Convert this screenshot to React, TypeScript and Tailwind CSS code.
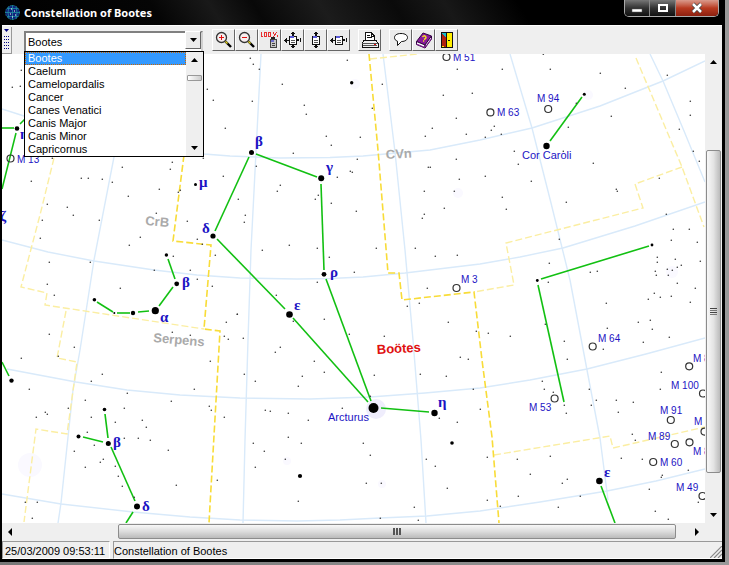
import { useState } from "react";
import type { ReactNode } from "react";

type Point = [number, number];

const constellations = [
  "Bootes",
  "Caelum",
  "Camelopardalis",
  "Cancer",
  "Canes Venatici",
  "Canis Major",
  "Canis Minor",
  "Capricornus",
];

// the chart shares one coordinate space, see viewBox in StarChart
const faintStars: Point[] = [
  [21, 70], [12, 87], [20, 86], [207, 89], [213, 100], [225, 128],
  [52, 158], [31, 181], [81, 178], [88, 178], [102, 179], [112, 182], [122, 167], [47, 204], [67, 207],
  [73, 215], [42, 220], [99, 220], [40, 238], [128, 196], [159, 189], [156, 213], [187, 221], [140, 237],
  [129, 245], [197, 239], [202, 244], [215, 255], [173, 256], [190, 270], [197, 279], [212, 286], [154, 270],
  [90, 262], [120, 288], [49, 262], [47, 284], [54, 295], [49, 334], [74, 347], [172, 332], [190, 335],
  [226, 322], [237, 314], [224, 336], [228, 339], [223, 176], [238, 199], [178, 192], [180, 190], [172, 162],
  [170, 169], [203, 158],
  [21, 358], [58, 356], [29, 389], [45, 412], [47, 414], [36, 417], [68, 408], [85, 400], [91, 381],
  [102, 374], [127, 393], [91, 417], [115, 422], [124, 408], [142, 420], [146, 427], [171, 401], [194, 389],
  [210, 361], [209, 406], [211, 410], [224, 417], [87, 432], [94, 445], [74, 451], [103, 459], [100, 462],
  [85, 467], [115, 466], [118, 476], [122, 486], [124, 438], [138, 438], [150, 440], [168, 450], [176, 485],
  [217, 480], [25, 502], [37, 502], [32, 518], [134, 497],
  [250, 58], [253, 64], [259, 69], [252, 101], [282, 84], [304, 105], [306, 114], [326, 136], [331, 145],
  [293, 153], [360, 137], [347, 60], [372, 108], [382, 84], [357, 159], [337, 177], [350, 171], [352, 172],
  [256, 166], [280, 185], [277, 191], [245, 215], [244, 222], [318, 195], [315, 199], [331, 203], [356, 211],
  [289, 245], [317, 248], [376, 248], [415, 248], [457, 69], [472, 93], [443, 95], [456, 118], [432, 128],
  [425, 136], [466, 134], [456, 159], [428, 167], [430, 167], [459, 179], [424, 191], [454, 191], [444, 208],
  [424, 214], [422, 218],
  [262, 250], [329, 257], [354, 272], [317, 282], [276, 295], [237, 314], [324, 319], [243, 338], [275, 352],
  [280, 347], [314, 361], [349, 334], [384, 336], [407, 306], [419, 303], [427, 288], [435, 256], [457, 255],
  [448, 322], [476, 331], [460, 357], [468, 359], [420, 374], [446, 376], [473, 389], [374, 375], [244, 374],
  [255, 381], [302, 376], [324, 372], [298, 386], [265, 410], [270, 411], [288, 413], [308, 420], [288, 437],
  [342, 408], [439, 418], [457, 422], [370, 396], [293, 321],
  [543, 54], [502, 69], [550, 69], [600, 73], [625, 88], [667, 75], [690, 101], [690, 115], [679, 129],
  [693, 151], [699, 161], [611, 116], [568, 127], [563, 151], [576, 103], [593, 163], [616, 189], [617, 191],
  [659, 178], [566, 202], [531, 181], [518, 164], [514, 151], [485, 176], [502, 197], [506, 209], [494, 126],
  [491, 130], [501, 134], [485, 137], [666, 214], [559, 239], [673, 229], [689, 229], [671, 240], [697, 242],
  [700, 261], [657, 257], [657, 262], [675, 259], [681, 265], [677, 267], [667, 269], [672, 270], [655, 271],
  [656, 275], [668, 275], [549, 263], [590, 272], [597, 271],
  [548, 282], [677, 283], [695, 288], [654, 293], [660, 297], [671, 296], [648, 299], [690, 302], [606, 303],
  [650, 320], [638, 322], [652, 329], [669, 337], [643, 342], [607, 328], [603, 349], [564, 341], [567, 359],
  [545, 324], [488, 333], [510, 336], [661, 372], [660, 389], [633, 402], [616, 400], [618, 412], [589, 389],
  [596, 400], [591, 405], [564, 405], [566, 413], [542, 381], [544, 389], [553, 392], [480, 409], [632, 434],
  [635, 440], [487, 457], [517, 459], [550, 456], [621, 458], [642, 459], [530, 474], [562, 483], [567, 479],
  [688, 470], [662, 475], [661, 477], [649, 489], [580, 496], [518, 496], [487, 500], [500, 506], [558, 507],
  [698, 502], [655, 511], [668, 519],
  [253, 443], [301, 443], [264, 451], [285, 459], [255, 467], [363, 443], [370, 455], [366, 483], [381, 483],
  [426, 459], [435, 466], [447, 488], [414, 507], [418, 520], [380, 518], [298, 501],
];

const brightStars: [number, number, number][] = [
  [251.5, 152.5, 2.5], [321.2, 178.3, 3], [213, 236, 2.6], [324, 274.3, 2.4], [289.5, 314.5, 3.3],
  [373.5, 408, 5], [434.5, 413, 3.2], [546.5, 146, 3.2], [584.3, 94.3, 1.5], [537.3, 280.5, 1.4],
  [652, 245, 1.4], [166.4, 255, 1.7], [176.7, 283.8, 2.4], [155.3, 310.7, 3.6], [133, 313, 2.2],
  [114.3, 313, 1], [94.4, 299.7, 1.8], [195.5, 184.5, 1.5], [104.5, 409.5, 1.8], [78.5, 436.5, 2],
  [108.3, 443.4, 2.5], [137, 506.4, 3], [11.5, 380.6, 2.2], [17, 128.5, 2.3], [599.4, 481, 3.3],
  [351.7, 82.7, 1.7], [300, 476, 2.1], [452, 443, 1.8],
];

const gridLines = [
  "135,54 114,157 94,260 80,350 73,390 61,503 58,523",
  "261,54 256,152 251,250 248,340 245,440 243,523",
  "383,54 395,152 405,250 413,340 421,440 426,523",
  "510,54 532,128 551,203 570,280 587,370 600,438 608,500",
  "650,54 663,81 684,131 705,182",
  "2,109 24,116 90,136 150,148 204,154 230,156 280,158 330,157.5 363,156 430,150 480,140 532,128 600,106 663,81 705,61",
  "2,240 48,252 94,261 154,270 197,275 240,278 297,279 330,278.5 363,277 405,273 480,264 520,257 563,248 635,226 705,202",
  "7,369 76,382 127,390 180,395 240,398 310,399 370,397 425,393 480,388 530,380 587,369 646,354 705,338",
  "2,494 61,504 133,512 190,517 240,520 297,521 340,520 380,518 427,516 480,511 540,502 607,491 656,481 705,469",
];

const boundaries = [
  "184,155 173,241 211,245 204,329 220,331 209,523",
  "369,54 378,150 386,248 388,273 399,273 402,300 474,292 482,360 492,437 499,523",
];

const paleBoundaries = [
  "54,158 40,215 21,287 47,293 45,305 204,329",
  "66,311 57,358 77,362 67,434 36,429 24,522",
  "370,59 418,54",
  "636,58 682,167 704,227",
  "682,167 635,184 643,208 506,243 514,285 474,292",
  "494,455 610,436 613,448 705,427",
];

const figureLines: [number, number, number, number][] = [
  [2, 128, 14, 128], [16, 133, 2, 189], [20, 124, 30, 114],
  [256, 154, 317, 177], [249, 157, 215, 231], [321, 184, 324, 270], [326, 279, 371, 401],
  [217, 239, 285, 309], [293, 318, 368, 402], [381, 408, 429, 412],
  [550, 141, 582, 97], [541, 279, 649, 246], [538, 285, 564, 402],
  [168, 259, 175, 279], [173, 287, 159, 306], [149, 311, 138, 312], [130, 313, 117, 313], [113, 312, 97, 302],
  [105, 414, 108, 438], [83, 437, 103, 442], [111, 447, 135, 501], [133, 512, 126, 523],
  [2, 362, 9, 376], [601, 486, 615, 523],
];

const deepSky: Point[] = [
  [446.5, 57], [490.4, 112.4], [548.2, 109], [456.5, 288], [592.7, 346.5], [554.6, 398.5], [689.2, 366.3],
  [703, 393.5], [670.8, 420], [704.5, 431.6], [674.8, 444], [689.5, 442.3], [653.2, 462], [702.5, 496], [10.5, 158.5],
];

const deepSkyNames: [string, number, number][] = [
  ["M 51", 453, 61], ["M 63", 497, 116], ["M 94", 537, 102], ["M 3", 461, 283], ["M 64", 598, 342],
  ["M 53", 529, 411], ["M 8", 693, 362], ["M 100", 671, 389], ["M 91", 660, 414], ["M 8", 694, 425],
  ["M 89", 648, 440], ["M 8", 693, 455], ["M 60", 660, 466], ["M 49", 676, 491], ["M 13", 17, 163],
];

const greek: [string, number, number][] = [
  ["β", 255, 146], ["γ", 326, 172], ["δ", 202, 233], ["ε", 294, 310], ["ρ", 330, 277], ["η", 438, 407],
  ["μ", 199, 187], ["β", 182, 287], ["α", 160, 322], ["β", 113, 447], ["δ", 142, 511], ["ε", 604, 477],
  ["ζ", 0, 221], ["η", 20, 139],
];

function StarChart() {
  return (
    <svg
      viewBox="2 54 703 469"
      preserveAspectRatio="xMinYMin slice"
      className="block h-full w-full bg-white font-['Liberation_Sans',sans-serif]"
      role="img"
      aria-label="Star chart of Bootes"
    >
      <g fill="#faf9ff">
        <circle cx="376" cy="409" r="10" fill="#efedfc" />
        <circle cx="355" cy="84" r="5" />
        <circle cx="458" cy="193" r="5" />
        <circle cx="672" cy="272" r="6" />
        <circle cx="30" cy="465" r="12" />
        <circle cx="287" cy="461" r="4" />
        <circle cx="382" cy="484" r="4" />
        <circle cx="588" cy="95" r="5" />
      </g>
      <g fill="none" stroke="#d9eafa" strokeWidth="1.4" strokeLinejoin="round">
        {gridLines.map((p) => <polyline key={p} points={p} />)}
      </g>
      <g fill="none" stroke="#fbeea2" strokeWidth="1.4" strokeDasharray="7 3">
        {paleBoundaries.map((p) => <polyline key={p} points={p} />)}
      </g>
      <g fill="none" stroke="#f8dc38" strokeWidth="1.6" strokeDasharray="7 3">
        {boundaries.map((p) => <polyline key={p} points={p} />)}
      </g>
      <g fill="#aaaaaa" fontSize="13" fontWeight="bold">
        <text x="386" y="159" transform="rotate(-3 386 159)">CVn</text>
        <text x="145" y="225" transform="rotate(5 145 225)">CrB</text>
        <text x="153" y="342" transform="rotate(5 153 342)">Serpens</text>
      </g>
      <text x="377" y="354" fill="#e01010" fontSize="13" fontWeight="bold" transform="rotate(-3 377 354)">Boötes</text>
      <g stroke="#12c012" strokeWidth="1.6">
        {figureLines.map(([x1, y1, x2, y2]) => (
          <line key={`${x1}-${y1}`} x1={x1} y1={y1} x2={x2} y2={y2} />
        ))}
      </g>
      <g fill="#333333">
        {faintStars.map(([x, y]) => (
          <circle key={`${x}-${y}`} cx={x + 0.3} cy={y + 0.3} r="0.8" />
        ))}
      </g>
      {brightStars.map(([x, y, r]) => <circle key={`${x}-${y}`} cx={x} cy={y} r={r} />)}
      <g fill="none" stroke="#333333" strokeWidth="1.2">
        {deepSky.map(([x, y]) => <circle key={`${x}-${y}`} cx={x} cy={y} r="3.5" />)}
      </g>
      <g fill="#1c14c4" fontSize="10">
        {deepSkyNames.map(([name, x, y]) => <text key={`${name}-${y}`} x={x} y={y}>{name}</text>)}
      </g>
      <g fill="#1c14c4" fontSize="11">
        <text x="522" y="159">Cor Caroli</text>
        <text x="328" y="421">Arcturus</text>
      </g>
      <g fill="#1c14c4" fontSize="15" fontWeight="bold" className="font-['Liberation_Serif',serif]">
        {greek.map(([letter, x, y]) => <text key={`${letter}-${x}`} x={x} y={y}>{letter}</text>)}
      </g>
    </svg>
  );
}

function Icon({ children }: { children: ReactNode }) {
  return (
    <svg viewBox="0 0 20 20" className="size-5" shapeRendering="crispEdges" aria-hidden="true">
      {children}
    </svg>
  );
}

function Magnifier({ plus }: { plus?: boolean }) {
  return (
    <Icon>
      <g shapeRendering="auto">
        <path d="M11.500 11.500 17 17" stroke="#000" strokeWidth="2.400" />
        <path d="M11 11 13.500 13.500" stroke="#e8d820" strokeWidth="1.400" />
        <circle cx="7.500" cy="7.500" r="5" fill="#f6eeee" stroke="#333" strokeWidth="1.300" />
      </g>
      <path d="M5 7h5v1H5z" fill="#e01010" />
      {plus && <path d="M7 5h1v5H7z" fill="#e01010" />}
    </Icon>
  );
}

function Page({ horizontal, vertical }: { horizontal?: boolean; vertical?: boolean }) {
  return (
    <Icon>
      <path d="M6.500 6.500h7v8h-7z" fill="#fff" stroke="#111" />
      <path d="M7 6h4v2H7z" fill="#5a5ad8" />
      <path d="M8 10h4v1H8zM8 12h4v1H8z" fill="#555" />
      {vertical && (
        <path d="M9 2h2v1h1v1h-1v2H9V4H8V3h1zM9 15h2v1h1v1h-1v1H9v-1H8v-1h1z" fill="#111" />
      )}
      {horizontal && (
        <path d="M1 10h1V9h1V8h1v2h2v1H4v2H3v-1H2v-1H1zM14 9h2v2h-2zM17 8h1v4h-1z" fill="#111" />
      )}
    </Icon>
  );
}

function ToolButton({ label, children }: { label: string; children: ReactNode }) {
  return (
    <button
      type="button"
      aria-label={label}
      className="flex h-[22px] w-[23px] items-center justify-center border border-t-white border-r-[#666] border-b-[#666] border-l-white bg-[#ececec]"
    >
      {children}
    </button>
  );
}

function Toolbar() {
  return (
    <div className="ml-[9px] flex items-center">
      <ToolButton label="Zoom in"><Magnifier plus /></ToolButton>
      <ToolButton label="Zoom out"><Magnifier /></ToolButton>
      <ToolButton label="100 %">
        <Icon>
          <path
            d="M1.500 2v5M1 6.500h2M4.500 2.500h2v4h-2zM8.500 2.500h2v4h-2zM13.500 2v2M17 2l-4 5M17.500 5v2"
            stroke="#e83030"
            fill="none"
          />
          <path d="M10.500 9.500h6v8h-6z" fill="#c8c8c8" stroke="#444" />
          <path d="M11 7h4v2h-4z" fill="#222" />
          <path d="M11 10h3v2h-3z" fill="#7070d0" />
          <path d="M12 13h3v1h-3zM12 15h3v1h-3z" fill="#444" />
        </Icon>
      </ToolButton>
      <ToolButton label="Fit page"><Page horizontal vertical /></ToolButton>
      <ToolButton label="Fit height"><Page vertical /></ToolButton>
      <ToolButton label="Fit width"><Page horizontal /></ToolButton>
      <div className="ml-2 flex">
        <ToolButton label="Print">
          <Icon>
            <path d="M5.500 10V2.500H11L14.500 6V10" fill="#fff" stroke="#111" />
            <path d="M11.500 3v3H14M7 5.500h3M7 7.500h5" stroke="#111" fill="none" />
            <path d="M4 10.500h12l2 3v4H2v-4z" fill="#f2f2f2" stroke="#111" />
            <path d="M2 13.500h16M3 15.500h14" stroke="#555" />
            <path d="M14 14h2v1h-2z" fill="#e01010" />
          </Icon>
        </ToolButton>
      </div>
      <div className="ml-2 flex">
        <ToolButton label="Comment">
          <Icon>
            <path
              d="M10 3.500c4.500 0 6.500 2 6.500 4s-2 4-6 4L6.500 15.500v-4.300C4.500 10.500 3.500 9.300 3.500 7.500c0-2 2-4 6.500-4z"
              fill="#fff"
              stroke="#111"
              shapeRendering="auto"
            />
          </Icon>
        </ToolButton>
        <ToolButton label="Help">
          <Icon>
            <g shapeRendering="auto">
              <path d="M2.500 11.500 9 3l8.500 3L11 15z" fill="#8a1a9a" stroke="#300040" />
              <path d="M2.500 11.500v3L11 18v-3zM11 15v3l6.500-9V6z" fill="#fff" stroke="#300040" />
              <path d="M2.500 14 11 17.500l6.500-9" fill="none" stroke="#8a1a9a" />
              <path d="M8.500 7q1.500-2 3-.5t-1.500 3M9 11h1.200" fill="none" stroke="#f4e420" strokeWidth="1.500" />
            </g>
          </Icon>
        </ToolButton>
        <ToolButton label="Exit">
          <Icon>
            <path d="M4.500 2.500h11v15h-11z" fill="#ffee00" stroke="#111" />
            <path d="M5 3h4v4H5z" fill="#18b8c8" />
            <path d="M5 4 9 7v10l-4-1z" fill="#b02010" />
            <path d="M9 3h1v14H9z" fill="#111" />
            <path d="M11 10h2v1h-2z" fill="#111" />
          </Icon>
        </ToolButton>
      </div>
    </div>
  );
}

function ConstellationPicker({ value, onChange }: { value: string; onChange: (v: string) => void }) {
  return (
    <div className="relative ml-3 h-[22px] w-[179px]">
      <select
        aria-label="Constellation"
        value={value}
        onChange={(e) => onChange(e.target.value)}
        className="h-full w-full appearance-none border-2 border-t-[#808080] border-r-[#d0d0d0] border-b-[#d0d0d0] border-l-[#808080] bg-white pl-[2px] text-[11px] leading-4 text-black"
      >
        {constellations.map((c) => <option key={c}>{c}</option>)}
      </select>
      <span className="pointer-events-none absolute top-[2px] right-[2px] flex h-[18px] w-4 items-center justify-center border border-t-white border-r-[#666] border-b-[#666] border-l-white bg-[#ececec]">
        <Arrow d="M0 0h7L3.500 4z" />
      </span>
      <div className="absolute top-full left-0 z-10 flex w-[180px] border border-black bg-white">
        <ul role="listbox" aria-label="Constellations" className="flex-1">
          {constellations.map((c) => (
            <li
              key={c}
              role="option"
              aria-selected={c === value}
              onClick={() => onChange(c)}
              className="h-[13px] pl-[3px] text-[11px] leading-[13px] aria-selected:bg-[#3399ff] aria-selected:text-white aria-selected:outline aria-selected:-outline-offset-1 aria-selected:outline-dotted aria-selected:outline-[#cc6600]"
            >
              {c}
            </li>
          ))}
        </ul>
        <div className="flex w-[17px] flex-col items-center bg-[#efefef] py-[6px]">
          <Arrow d="M0 4h7L3.500 0z" />
          <div className="mt-[13px] h-[6px] w-[15px] rounded-[1px] border border-[#999] bg-linear-to-r from-white to-[#ccc]" />
          <div className="flex-1" />
          <Arrow d="M0 0h7L3.500 4z" />
        </div>
      </div>
    </div>
  );
}

function Arrow({ d }: { d: string }) {
  return (
    <svg viewBox="0 0 7 4" className="h-1 w-[7px]" aria-hidden="true">
      <path d={d} />
    </svg>
  );
}

function TitleBar() {
  return (
    <header className="flex h-[25px] shrink-0 justify-between bg-[linear-gradient(58deg,#000_0%,#050505_22%,#191919_30%,#080808_36%,#1c1c1c_45%,#0a0a0a_55%,#181818_62%,#000_72%)] pr-[3px]">
      <div className="flex items-center gap-1 pl-[3px]">
        <svg viewBox="0 0 15 15" className="size-[15px]" aria-hidden="true">
          <circle cx="7.500" cy="7.500" r="7" fill="#10207c" stroke="#1d8a9a" strokeWidth=".8" strokeDasharray="2 1" />
          <path d="M7.500 0v15M0 7.500h15M2 3.500h11M2 11.500h11M4 1.500q-2 6 0 12M11 1.500q2 6 0 12" stroke="#2090a0" strokeWidth=".8" fill="none" />
          <path d="M6 4h1M9 6h1M5 9h1M10 10h1M7 12h1" stroke="#fff" />
        </svg>
        <h1 className="font-['Noto_Sans',sans-serif] text-[11px] leading-4 font-bold text-white">
          Constellation of Bootes
        </h1>
      </div>
      <div className="flex h-[17px] overflow-hidden rounded-b-[5px] border border-t-0 border-[#aaa]">
        <button
          type="button"
          aria-label="Minimize"
          className="flex w-[25px] items-center justify-center border-r border-[#888] bg-linear-to-b from-[#777] via-[#333] to-[#111]"
        >
          <svg viewBox="0 0 12 12" className="size-3" aria-hidden="true">
            <path d="M1 7h10v3H1z" fill="#fff" stroke="#555" strokeWidth=".5" />
          </svg>
        </button>
        <button
          type="button"
          aria-label="Maximize"
          className="flex w-[26px] items-center justify-center border-r border-[#888] bg-linear-to-b from-[#777] via-[#333] to-[#111]"
        >
          <svg viewBox="0 0 12 12" className="size-3" aria-hidden="true">
            <path d="M2 3h8v6H2z" fill="none" stroke="#fff" strokeWidth="2" />
          </svg>
        </button>
        <button
          type="button"
          aria-label="Close"
          className="flex w-[42px] items-center justify-center bg-linear-to-b from-[#d99a8c] via-[#b83a20] to-[#8c2010]"
        >
          <svg viewBox="0 0 14 12" className="h-3 w-[14px]" aria-hidden="true">
            <path d="M3 2 11 10M11 2 3 10" stroke="#444" strokeWidth="4" />
            <path d="M3 2 11 10M11 2 3 10" stroke="#fff" strokeWidth="2.500" />
          </svg>
        </button>
      </div>
    </header>
  );
}

function VerticalScroll() {
  return (
    <div className="flex w-[17px] shrink-0 flex-col items-center bg-[#efefef]">
      <button type="button" aria-label="Scroll up" className="flex h-4 w-full items-center justify-center">
        <Arrow d="M0 4h7L3.500 0z" />
      </button>
      <div className="grow-[80] basis-0" />
      <div className="flex w-[15px] grow-[322] basis-0 flex-col items-center justify-center gap-px rounded-[2px] border border-[#8c8c8c] bg-linear-to-r from-[#f8f8f8] via-[#e4e4e4] to-[#bbb]">
        <span className="h-px w-[7px] bg-[#444]" />
        <span className="h-px w-[7px] bg-[#777]" />
        <span className="h-px w-[7px] bg-[#444]" />
        <span className="h-px w-[7px] bg-[#777]" />
      </div>
      <div className="grow-[34] basis-0" />
      <button type="button" aria-label="Scroll down" className="flex h-4 w-full items-center justify-center">
        <Arrow d="M0 0h7L3.500 4z" />
      </button>
    </div>
  );
}

function HorizontalScroll() {
  return (
    <div className="flex h-[18px] shrink-0 items-start bg-[#efefef] pt-px pr-[17px]">
      <button type="button" aria-label="Scroll left" className="flex h-[15px] w-4 items-center justify-center">
        <svg viewBox="0 0 4 8" className="h-2 w-1" aria-hidden="true"><path d="M4 0v8L0 4z" /></svg>
      </button>
      <div className="grow-[100] basis-0" />
      <div className="flex h-[15px] grow-[558] basis-0 items-center justify-center gap-px rounded-[2px] border border-[#8c8c8c] bg-linear-to-b from-[#f8f8f8] via-[#dcdcdc] to-[#bbb]">
        <span className="h-[7px] w-0.5 bg-[#555]" />
        <span className="h-[7px] w-0.5 bg-[#555]" />
        <span className="h-[7px] w-0.5 bg-[#555]" />
      </div>
      <div className="grow-[13] basis-0" />
      <button type="button" aria-label="Scroll right" className="flex h-[15px] w-4 items-center justify-center">
        <svg viewBox="0 0 4 8" className="h-2 w-1" aria-hidden="true"><path d="M0 0v8l4-4z" /></svg>
      </button>
    </div>
  );
}

function StatusBar() {
  return (
    <footer className="flex h-[18px] shrink-0 gap-[3px] bg-[#efefef] text-[11px] leading-[18px]">
      <span className="w-[108px] border border-t-[#999] border-r-white border-b-white border-l-[#999] pl-[2px] whitespace-nowrap">
        25/03/2009 09:53:11
      </span>
      <span className="flex flex-1 justify-between border border-r-0 border-t-[#999] border-b-white border-l-[#999]">
        Constellation of Bootes
        <svg viewBox="0 0 12 12" className="mt-1 size-3" aria-hidden="true">
          <path d="M0 12 12 0M4 12l8-8M8 12l4-4" stroke="#888" strokeWidth="1.200" />
        </svg>
      </span>
    </footer>
  );
}

export default function App() {
  const [selected, setSelected] = useState("Bootes");

  return (
    <div className="h-screen w-full bg-linear-to-r from-[#777] to-[#999] pr-1 pb-[3px] font-['Liberation_Sans',sans-serif] text-black">
      <div className="flex h-full flex-col border-r-[3px] border-b-[3px] border-l-2 border-black bg-black">
        <TitleBar />
        <div className="flex h-[29px] shrink-0 items-center border-t border-white bg-[#efefef]">
          <div className="flex h-[27px] w-[10px] flex-col items-center gap-1 border-r border-b border-[#999] pt-[2px]">
            <svg viewBox="0 0 5 3" className="h-[3px] w-[5px]" aria-hidden="true">
              <path d="M0 0h5L2.500 3z" fill="#000080" />
            </svg>
            <svg viewBox="0 0 5 14" className="h-[14px] w-[5px]" aria-hidden="true">
              <path
                d="M.5 0v14M2.500 0v14M4.500 0v14"
                stroke="#000080"
                strokeDasharray="1 2"
                shapeRendering="crispEdges"
              />
            </svg>
          </div>
          <ConstellationPicker value={selected} onChange={setSelected} />
          <Toolbar />
        </div>
        <div className="flex min-h-0 flex-1">
          <main className="min-w-0 flex-1 overflow-hidden">
            <StarChart />
          </main>
          <VerticalScroll />
        </div>
        <HorizontalScroll />
        <StatusBar />
      </div>
    </div>
  );
}
